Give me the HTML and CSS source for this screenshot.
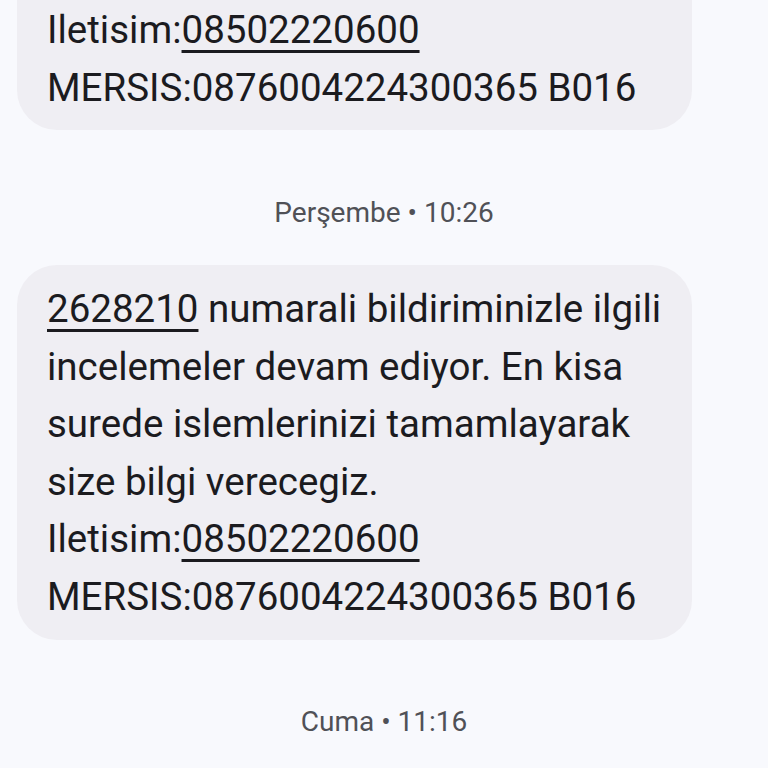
FILE: index.html
```html
<!DOCTYPE html>
<html lang="tr">
<head>
    <meta charset="UTF-8">
    <meta name="viewport" content="width=device-width, initial-scale=1.0">
    <title>Mesajlar</title>
    <link rel="stylesheet" href="styles.css">
</head>
<body>
    <div class="thread">
        <!-- Önceki mesaj (yukarı kaydırılmış, yalnızca son satırlar) -->
        <div class="bubble first">
            <p class="msg">
                Iletisim:<a class="num" href="#">08502220600</a><br>
                MERSIS:0876004224300365 B016
            </p>
        </div>

        <div class="stamp">Perşembe • 10:26</div>

        <div class="bubble">
            <p class="msg">
                <a class="num" href="#">2628210</a> numarali bildiriminizle ilgili<br>
                incelemeler devam ediyor. En kisa<br>
                surede islemlerinizi tamamlayarak<br>
                size bilgi verecegiz.<br>
                Iletisim:<a class="num" href="#">08502220600</a><br>
                MERSIS:0876004224300365 B016
            </p>
        </div>

        <div class="stamp">Cuma • 11:16</div>
    </div>
</body>
</html>
```

FILE: styles.css
```css
* {
    margin: 0;
    padding: 0;
    box-sizing: border-box;
}

body {
    background-color: #F8F9FD;
    color: #1B1B1F;
    font-family: Roboto, 'Noto Sans', sans-serif;
    overflow: hidden;
}

.thread {
    display: flex;
    flex-direction: column;
    padding: 0 17px;
}

/* Bulles de message */
.bubble {
    width: 675px;
    background: #EFEEF3;
    border-radius: 40px;
    padding: 15px 30px 15px;
}

.bubble.first {
    border-radius: 0 0 40px 40px;
    padding: 1px 30px 14px;
}

.msg {
    font-size: 38.5px;
    line-height: 57.5px;
    white-space: nowrap;
}

.num {
    color: inherit;
    text-decoration: underline;
    text-decoration-thickness: 3px;
    text-underline-offset: 7px;
}

/* Date / heure */
.stamp {
    text-align: center;
    font-size: 28px;
    line-height: 34px;
    color: #505157;
    margin: 66px 0 35px;
}

.stamp:last-child {
    margin-top: 65px;
}
```
